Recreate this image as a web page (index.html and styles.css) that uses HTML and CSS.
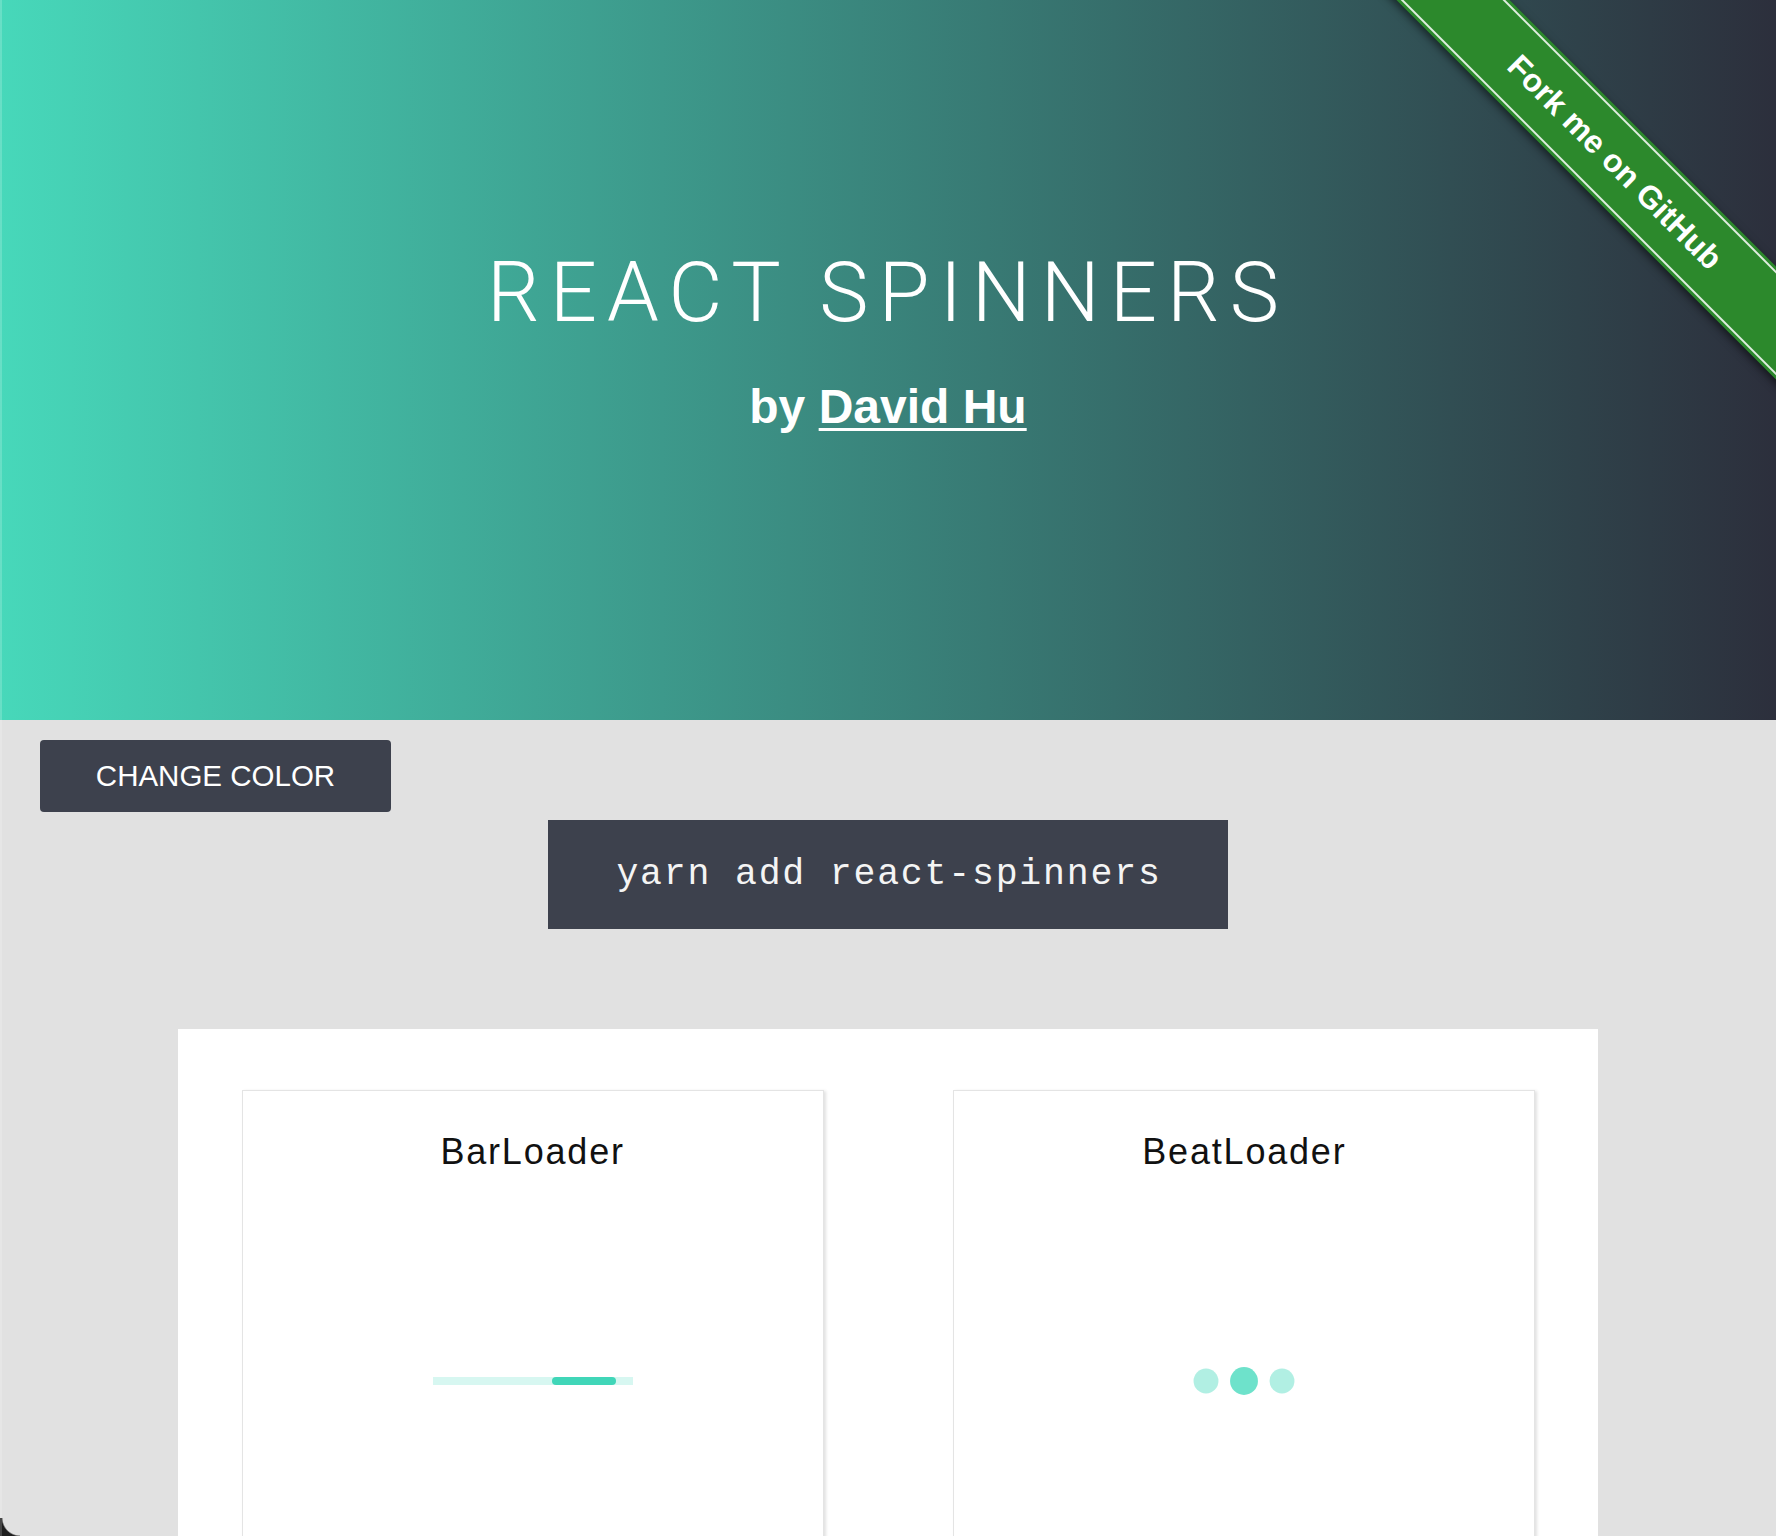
FILE: index.html
```html
<!DOCTYPE html>
<html lang="en">
<head>
<meta charset="utf-8">
<title>React Spinners</title>
<link rel="stylesheet" href="styles.css">
</head>
<body>
<header class="hero">
  <h1 class="hero-title">REACT SPINNERS</h1>
  <p class="hero-by">by <a class="hero-link" href="#">David Hu</a></p>
  <a class="ribbon" href="#"><span class="ribbon-text">Fork me on GitHub</span></a>
</header>
<main class="content">
  <button class="color-btn" type="button">CHANGE COLOR</button>
  <div class="install"><code class="install-code">yarn add react-spinners</code></div>
  <section class="panel">
    <div class="grid">
      <article class="card">
        <h2 class="card-title">BarLoader</h2>
        <div class="card-body">
          <div class="bar-track"><div class="bar-fill"></div></div>
        </div>
      </article>
      <article class="card">
        <h2 class="card-title">BeatLoader</h2>
        <div class="card-body">
          <div class="beat">
            <span class="dot dot-side"></span>
            <span class="dot dot-mid"></span>
            <span class="dot dot-side"></span>
          </div>
        </div>
      </article>
    </div>
  </section>
</main>
<div class="win-corner"></div>
<div class="win-edge"></div>
</body>
</html>
```

FILE: styles.css
```css
html, body {
  margin: 0;
  padding: 0;
}
body {
  background: #e1e1e1;
  font-family: "Liberation Sans", Arial, sans-serif;
  color: #111;
}

.hero {
  position: relative;
  overflow: hidden;
  height: 720px;
  box-sizing: border-box;
  padding-top: 243px;
  background: linear-gradient(to right, #47d8ba 0%, #2c2f3c 100%);
  color: #fff;
  text-align: center;
}
.hero-title {
  margin: 0;
  font-family: "Roboto", "Liberation Sans", sans-serif;
  font-weight: 300;
  font-size: 83px;
  line-height: 100px;
  letter-spacing: 10px;
}
.hero-by {
  margin: 34px 0 0;
  font-family: "Liberation Sans", Arial, sans-serif;
  font-weight: 700;
  font-size: 48px;
  line-height: 60px;
}
.hero-link {
  color: #fff;
  text-decoration: underline;
  text-decoration-thickness: 3px;
  text-underline-offset: 5px;
}

.ribbon {
  position: absolute;
  left: 1265px;
  top: 122px;
  width: 700px;
  height: 80px;
  background: #2c892c;
  transform: rotate(45deg);
  box-shadow: 0 3px 9px rgba(0, 0, 0, 0.55);
  display: flex;
  align-items: center;
  justify-content: center;
  text-decoration: none;
}
.ribbon::before,
.ribbon::after {
  content: "";
  position: absolute;
  left: 0;
  right: 0;
  height: 2px;
  background: rgba(255, 255, 255, 0.85);
}
.ribbon::before { top: 3px; }
.ribbon::after { bottom: 3px; }
.ribbon-text {
  color: #fff;
  font-family: "Liberation Sans", Arial, sans-serif;
  font-weight: 700;
  font-size: 32px;
  line-height: 1;
}

.content {
  padding: 20px 0 0;
}
.color-btn {
  display: block;
  margin-left: 40px;
  width: 351px;
  height: 72px;
  border: 0;
  border-radius: 4px;
  background: #3d414d;
  color: #fff;
  font-family: "Liberation Sans", Arial, sans-serif;
  font-size: 29.5px;
  padding: 0;
  cursor: pointer;
}
.install {
  display: flex;
  justify-content: center;
  margin-top: 8px;
}
.install-code {
  display: flex;
  align-items: center;
  justify-content: center;
  width: 680px;
  height: 109px;
  box-sizing: border-box;
  padding-left: 2px;
  background: #3d414d;
  color: #f4f4f4;
  font-family: "Liberation Mono", "Courier New", monospace;
  font-size: 36.5px;
  letter-spacing: 1.8px;
}

.panel {
  width: 80%;
  margin: 100px auto 0;
  background: #fff;
  box-sizing: border-box;
  padding: 61px 63px 120px 64px;
}
.grid {
  display: grid;
  grid-template-columns: 582px 582px;
  justify-content: space-between;
}
.card {
  border: 1px solid #e4e4e4;
  box-shadow: 2px 1px 3px rgba(0, 0, 0, 0.12);
  background: #fff;
  padding: 39px 0 60px;
}
.card-title {
  margin: 0;
  text-align: center;
  font-family: "Liberation Sans", Arial, sans-serif;
  font-weight: 400;
  font-size: 36px;
  line-height: 44px;
  letter-spacing: 1.8px;
  color: #111;
}
.card-body {
  height: 414px;
  display: flex;
  align-items: center;
  justify-content: center;
}

.bar-track {
  position: relative;
  width: 200px;
  height: 8px;
  background: rgba(54, 215, 183, 0.2);
  overflow: hidden;
}
.bar-fill {
  position: absolute;
  left: 119px;
  top: 0;
  width: 64px;
  height: 8px;
  border-radius: 4px;
  background: #40d6b8;
}

.beat {
  display: flex;
  align-items: center;
}
.dot {
  display: block;
  width: 30px;
  height: 30px;
  margin: 4px;
  border-radius: 50%;
  background: #36d7b7;
}
.dot-side {
  transform: scale(0.83);
  opacity: 0.39;
}
.dot-mid {
  transform: scale(0.93);
  opacity: 0.72;
}

.win-corner {
  position: fixed;
  left: 0;
  bottom: 0;
  width: 20px;
  height: 18px;
  background: radial-gradient(circle at 100% 0, transparent 17px, #1e1e1e 18.5px);
}
.win-edge {
  position: fixed;
  left: 0;
  top: 0;
  bottom: 0;
  width: 2px;
  background: rgba(255, 255, 255, 0.18);
}
```
